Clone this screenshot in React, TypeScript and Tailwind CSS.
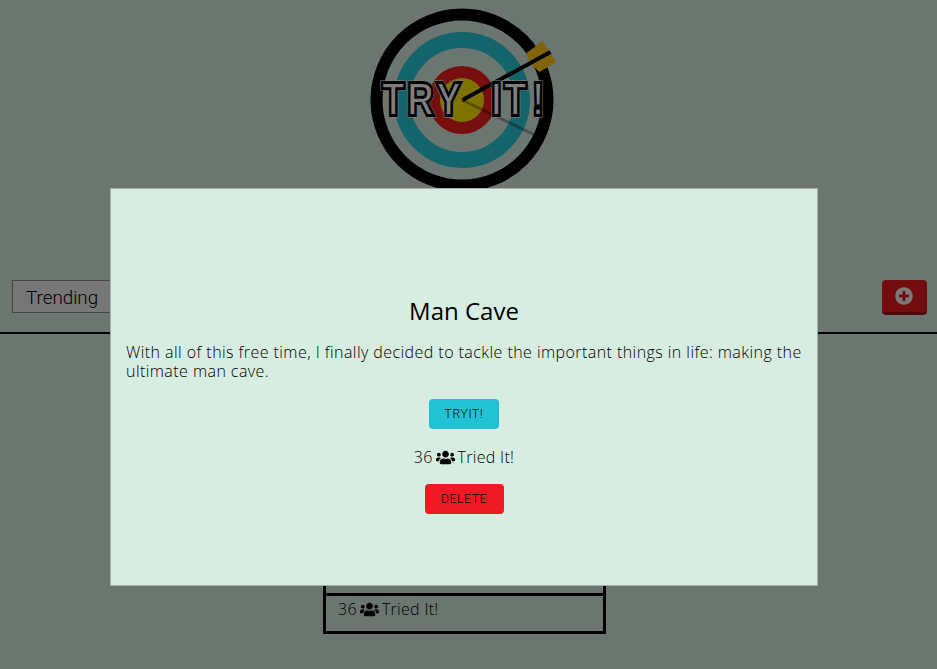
import { FaPlusCircle, FaUsers } from "react-icons/fa";

const bodyFont = "font-['Open_Sans','Noto_Sans',sans-serif]";

const logoText = {
  x: "18.75 50.4 86.7 155.4 171.25 206.25",
  y: 110,
  transform: "scale(0.8 1)",
  fontFamily: "'Liberation Sans', sans-serif",
  fontWeight: 700,
  fontSize: 46,
};

function Logo() {
  return (
    <svg viewBox="0 0 190 190" className="block h-[190px] w-[190px]">
      <circle cx="95" cy="95" r="85.5" fill="none" stroke="#000" strokeWidth="12" />
      <circle cx="95" cy="95" r="60" fill="none" stroke="#28c8d8" strokeWidth="16" />
      <circle cx="95" cy="95" r="34" fill="#f01e1e" />
      <circle cx="95" cy="95" r="22" fill="#ffe600" />
      <line x1="95" y1="95" x2="168" y2="130" stroke="#000" strokeOpacity="0.3" strokeWidth="3" />
      <polygon points="159.5,48 175.5,36 189.5,57 172.5,67 162.5,58" fill="#ffc814" />
      <line x1="95.5" y1="95" x2="183.5" y2="47" stroke="#000" strokeWidth="4" />
      <text {...logoText} fill="#fff" stroke="#fff" strokeWidth="5.2">TRYIT!</text>
      <text {...logoText} fill="#000" stroke="#000" strokeWidth="4.2">TRYIT!</text>
      <text {...logoText} fill="#fff" stroke="#000" strokeWidth="1.8">TRYIT!</text>
    </svg>
  );
}

export default function App() {
  return (
    <div className={`relative h-[669px] w-[937px] overflow-hidden bg-[#d8ede2] text-black ${bodyFont}`}>
      {/* PAGE BEHIND */}
      <div className="flex justify-center pr-[13px] pt-[5px]">
        <Logo />
      </div>

      <div className="mt-[85px] flex h-[54px] items-start justify-between border-b-2 border-black pl-3 pr-[10px]">
        <button className="h-[33px] w-[160px] border-y border-l border-[#8a8a8a] bg-[#efefef] pl-[13px] pt-[3px] text-left font-['Roboto',sans-serif] text-[18.8px] font-light">
          Trending
        </button>
        <button className="flex h-[35px] w-[45px] items-center justify-center rounded border-b-[3px] border-[#a00f14] bg-[#e8191f] text-lg text-[#f5f5f5]">
          <FaPlusCircle className="-ml-[1px]" />
        </button>
      </div>

      <div className="mx-auto mt-[226px] w-[283px] -translate-x-[4px] border-x-[3px] border-b-[3px] border-black">
        <div className="h-[36px] border-b-[3px] border-black" />
        <p className="flex h-[35px] items-start gap-[3px] pl-3 pt-[3px] text-base font-light leading-5 tracking-[0.3px]">
          36 <FaUsers className="mt-[1px] text-[19px]" /> Tried It!
        </p>
      </div>

      {/* OVERLAY + MODAL */}
      <div className="absolute inset-0 flex justify-center bg-black/50 pr-[9px] pt-[188px]">
        <div className="flex h-[398px] w-[708px] flex-col items-center border border-[#a5b0aa] bg-[#d8ede2] px-[15px] pt-[107px]">
          <h2 className="text-2xl font-normal leading-[30px]">Man Cave</h2>
          <p className="mt-[17px] w-[680px] self-start text-base font-light leading-[19px] tracking-[0.44px]">
            With all of this free time, I finally decided to tackle the important things in life: making the ultimate man cave.
          </p>
          <button className="mt-[18px] h-[30px] w-[70px] rounded bg-[#22c1d4] font-['Roboto',sans-serif] text-xs font-light tracking-[0.7px]">
            TRYIT!
          </button>
          <p className="mt-[18px] flex items-center gap-[3px] text-base font-light leading-5 tracking-[0.3px]">
            36 <FaUsers className="text-[19px]" /> Tried It!
          </p>
          <button className="mt-[17px] h-[30px] w-[79px] rounded bg-[#f01a24] font-['Roboto',sans-serif] text-xs font-light tracking-[0.7px]">
            DELETE
          </button>
        </div>
      </div>
    </div>
  );
}
